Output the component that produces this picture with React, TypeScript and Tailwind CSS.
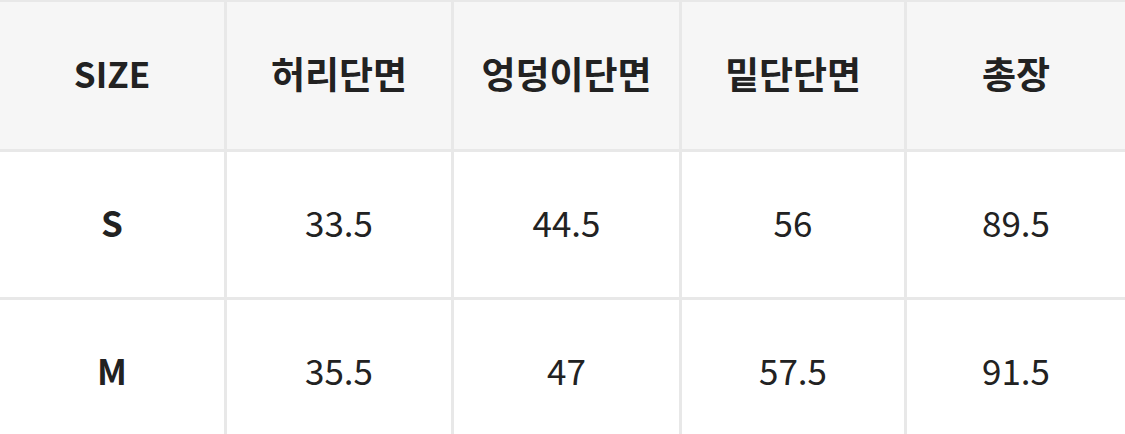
const headers = ["SIZE", "허리단면", "엉덩이단면", "밑단단면", "총장"];

const rows = [
  ["S", "33.5", "44.5", "56", "89.5"],
  ["M", "35.5", "47", "57.5", "91.5"],
];

const App = () => {
  return (
    <div
      className="w-[1125px] h-[434px] overflow-hidden bg-white"
      style={{ fontFamily: '"Noto Sans CJK KR", "Noto Sans", sans-serif' }}
    >
      <div className="grid grid-cols-[224px_224px_225px_222px_1fr] gap-[3px] bg-[#e8e8e8] pt-[2px] text-[#222222]">
        {headers.map((h, i) => (
          <div
            key={h}
            className={`h-[147px] bg-[#f6f6f6] flex items-center justify-center font-bold pb-[4px] ${
              i === 0 ? "text-[35px]" : "text-[37px]"
            }`}
          >
            {h}
          </div>
        ))}
        {rows.map((row) =>
          row.map((cell, i) => (
            <div
              key={row[0] + i}
              className={`h-[145px] bg-white flex items-center justify-center text-[35px] pb-[4px] ${
                i === 0 ? "font-bold" : "font-normal"
              }`}
            >
              {cell}
            </div>
          ))
        )}
      </div>
    </div>
  );
};

export default App;
